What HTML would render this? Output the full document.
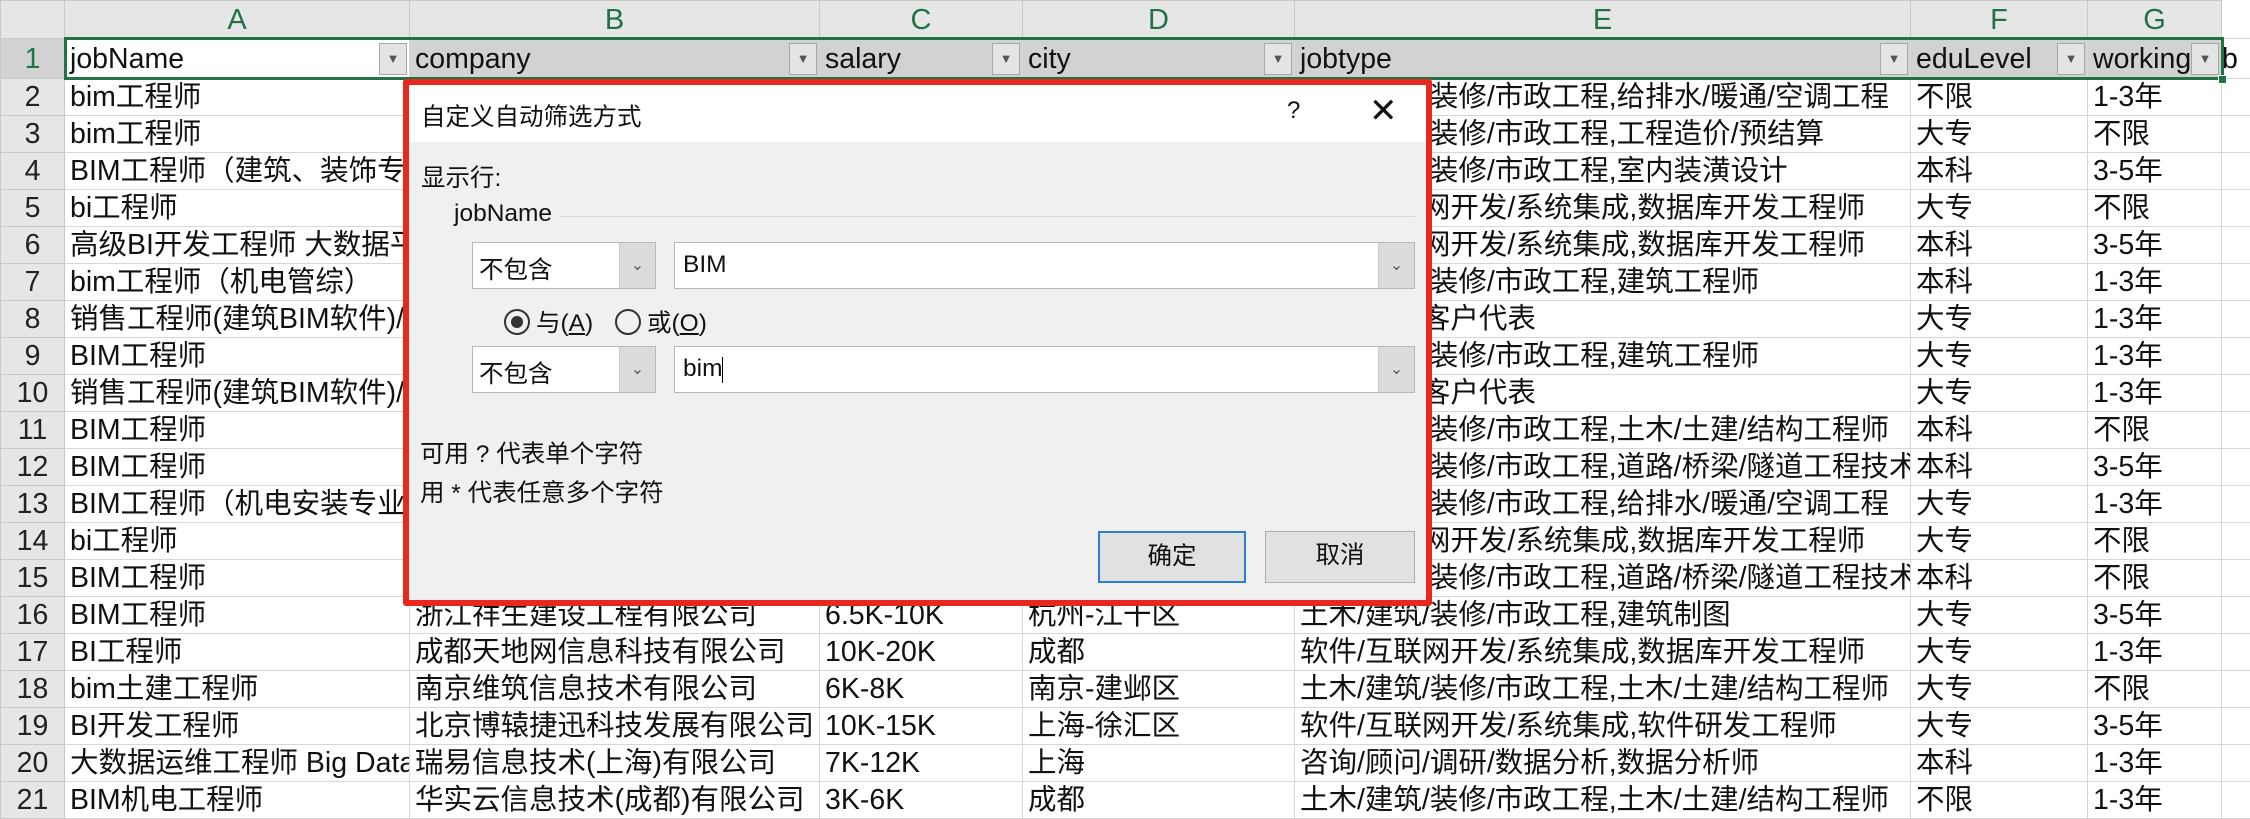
<!DOCTYPE html>
<html><head><meta charset="utf-8"><style>
*{box-sizing:border-box;margin:0;padding:0}
body{width:2250px;height:818px;overflow:hidden;background:#fff;position:relative;font-family:"Liberation Sans","Noto Sans CJK SC",sans-serif;color:#111}
table{border-collapse:collapse;table-layout:fixed;position:absolute;left:0;top:0;width:2250px}
td{border:1px solid #d6d6d6;overflow:hidden;white-space:nowrap;font-size:28.5px;padding:0 0 0 5px;height:37px;line-height:34px}
tr.ch td{background:#e6e6e6;color:#217346;text-align:center;height:38px;font-size:29px;border-color:#c8c8c8;padding:0}
td.rh{background:#e6e6e6;text-align:center;padding:0;color:#222;border-color:#c8c8c8}
tr.h1 td{height:40px;background:#d2d2d2;position:relative}
tr.h1 td.a{background:#fff}
tr.h1 td.rh{background:#d2d2d2;color:#217346}
.dd{position:absolute;right:2px;top:4px;width:28px;height:32px;border:1px solid #a8a8a8;background:#e4e4e4;font-size:13px;line-height:30px;text-align:center;color:#555;padding:0}
.sel{position:absolute;left:64px;top:37px;width:2160px;height:43px;border:3px solid #217346}
.fh{position:absolute;left:2218px;top:75px;width:9px;height:9px;background:#217346;border:1px solid #fff}
.dlg{position:absolute;left:403px;top:79px;width:1029px;height:527px;border:6px solid #e8281e;background:#f0f0f0;font-size:24.5px;border-radius:3px}
.tb{position:absolute;left:0;top:0;right:0;height:57px;background:#fff}
.abs{position:absolute;white-space:nowrap}
.combo{position:absolute;background:#fff;border:1px solid #b8b8b8}
.btn{position:absolute;right:0;top:0;bottom:0;width:36px;background:#dcdcdc;border-left:1px solid #c8c8c8;text-align:center;color:#555;font-size:16px}
.pb{position:absolute;background:#e1e1e1;border:1px solid #adadad;text-align:center;line-height:48px}
</style></head><body>
<table>
<colgroup><col style="width:64px"><col style="width:345px"><col style="width:410px"><col style="width:203px"><col style="width:272px"><col style="width:616px"><col style="width:177px"><col style="width:134px"><col style="width:29px"></colgroup>
<tr class="ch"><td style="background:#e6e6e6"></td><td>A</td><td>B</td><td>C</td><td>D</td><td>E</td><td>F</td><td>G</td><td style="background:#fff;border:none"></td></tr>
<tr class="h1"><td class="rh">1</td><td class="a">jobName<span class="dd">▼</span></td><td>company<span class="dd">▼</span></td><td>salary<span class="dd">▼</span></td><td>city<span class="dd">▼</span></td><td>jobtype<span class="dd">▼</span></td><td>eduLevel<span class="dd">▼</span></td><td>working<span class="dd">▼</span></td><td style="background:#fff;padding:0">b</td></tr>
<tr><td class="rh">2</td><td>bim工程师</td><td></td><td></td><td></td><td>土木/建筑/装修/市政工程,给排水/暖通/空调工程</td><td>不限</td><td>1-3年</td><td></td></tr>
<tr><td class="rh">3</td><td>bim工程师</td><td></td><td></td><td></td><td>土木/建筑/装修/市政工程,工程造价/预结算</td><td>大专</td><td>不限</td><td></td></tr>
<tr><td class="rh">4</td><td>BIM工程师（建筑、装饰专业）</td><td></td><td></td><td></td><td>土木/建筑/装修/市政工程,室内装潢设计</td><td>本科</td><td>3-5年</td><td></td></tr>
<tr><td class="rh">5</td><td>bi工程师</td><td></td><td></td><td></td><td>软件/互联网开发/系统集成,数据库开发工程师</td><td>大专</td><td>不限</td><td></td></tr>
<tr><td class="rh">6</td><td>高级BI开发工程师 大数据平台</td><td></td><td></td><td></td><td>软件/互联网开发/系统集成,数据库开发工程师</td><td>本科</td><td>3-5年</td><td></td></tr>
<tr><td class="rh">7</td><td>bim工程师（机电管综）</td><td></td><td></td><td></td><td>土木/建筑/装修/市政工程,建筑工程师</td><td>本科</td><td>1-3年</td><td></td></tr>
<tr><td class="rh">8</td><td>销售工程师(建筑BIM软件)/</td><td></td><td></td><td></td><td>销售业务,客户代表</td><td>大专</td><td>1-3年</td><td></td></tr>
<tr><td class="rh">9</td><td>BIM工程师</td><td></td><td></td><td></td><td>土木/建筑/装修/市政工程,建筑工程师</td><td>大专</td><td>1-3年</td><td></td></tr>
<tr><td class="rh">10</td><td>销售工程师(建筑BIM软件)/</td><td></td><td></td><td></td><td>销售业务,客户代表</td><td>大专</td><td>1-3年</td><td></td></tr>
<tr><td class="rh">11</td><td>BIM工程师</td><td></td><td></td><td></td><td>土木/建筑/装修/市政工程,土木/土建/结构工程师</td><td>本科</td><td>不限</td><td></td></tr>
<tr><td class="rh">12</td><td>BIM工程师</td><td></td><td></td><td></td><td>土木/建筑/装修/市政工程,道路/桥梁/隧道工程技术</td><td>本科</td><td>3-5年</td><td></td></tr>
<tr><td class="rh">13</td><td>BIM工程师（机电安装专业）</td><td></td><td></td><td></td><td>土木/建筑/装修/市政工程,给排水/暖通/空调工程</td><td>大专</td><td>1-3年</td><td></td></tr>
<tr><td class="rh">14</td><td>bi工程师</td><td></td><td></td><td></td><td>软件/互联网开发/系统集成,数据库开发工程师</td><td>大专</td><td>不限</td><td></td></tr>
<tr><td class="rh">15</td><td>BIM工程师</td><td></td><td></td><td></td><td>土木/建筑/装修/市政工程,道路/桥梁/隧道工程技术</td><td>本科</td><td>不限</td><td></td></tr>
<tr><td class="rh">16</td><td>BIM工程师</td><td>浙江祥生建设工程有限公司</td><td>6.5K-10K</td><td>杭州-江干区</td><td>土木/建筑/装修/市政工程,建筑制图</td><td>大专</td><td>3-5年</td><td></td></tr>
<tr><td class="rh">17</td><td>BI工程师</td><td>成都天地网信息科技有限公司</td><td>10K-20K</td><td>成都</td><td>软件/互联网开发/系统集成,数据库开发工程师</td><td>大专</td><td>1-3年</td><td></td></tr>
<tr><td class="rh">18</td><td>bim土建工程师</td><td>南京维筑信息技术有限公司</td><td>6K-8K</td><td>南京-建邺区</td><td>土木/建筑/装修/市政工程,土木/土建/结构工程师</td><td>大专</td><td>不限</td><td></td></tr>
<tr><td class="rh">19</td><td>BI开发工程师</td><td>北京博辕捷迅科技发展有限公司</td><td>10K-15K</td><td>上海-徐汇区</td><td>软件/互联网开发/系统集成,软件研发工程师</td><td>大专</td><td>3-5年</td><td></td></tr>
<tr><td class="rh">20</td><td>大数据运维工程师 Big Data</td><td>瑞易信息技术(上海)有限公司</td><td>7K-12K</td><td>上海</td><td>咨询/顾问/调研/数据分析,数据分析师</td><td>本科</td><td>1-3年</td><td></td></tr>
<tr><td class="rh">21</td><td>BIM机电工程师</td><td>华实云信息技术(成都)有限公司</td><td>3K-6K</td><td>成都</td><td>土木/建筑/装修/市政工程,土木/土建/结构工程师</td><td>不限</td><td>1-3年</td><td></td></tr>
</table>
<div class="sel"></div><div class="fh"></div>

<div class="dlg">
 <div class="tb"></div>
 <div class="abs" style="left:12px;top:13px">自定义自动筛选方式</div>
 <div class="abs" style="left:878px;top:12px;font-size:24px">?</div>
 <div class="abs" style="left:960px;top:6px;font-size:34px;font-weight:300">✕</div>
 <div class="abs" style="left:12px;top:74px">显示行:</div>
 <div class="abs" style="left:45px;top:115px">jobName</div>
 <div class="abs" style="left:150px;top:131px;width:856px;height:1px;background:#d8d8d8"></div>
 <div class="combo" style="left:63px;top:157px;width:184px;height:47px"><span class="abs" style="left:6px;top:8px">不包含</span><div class="btn" style="line-height:45px">⌄</div></div>
 <div class="combo" style="left:265px;top:157px;width:741px;height:47px"><span class="abs" style="left:8px;top:8px">BIM</span><div class="btn" style="line-height:45px">⌄</div></div>
 <div class="abs" style="left:95px;top:224px;width:26px;height:26px;border:2px solid #333;border-radius:50%"><div style="position:absolute;left:5px;top:5px;width:12px;height:12px;border-radius:50%;background:#333"></div></div>
 <div class="abs" style="left:127px;top:219px">与(<u>A</u>)</div>
 <div class="abs" style="left:206px;top:224px;width:26px;height:26px;border:2px solid #333;border-radius:50%"></div>
 <div class="abs" style="left:238px;top:219px">或(<u>O</u>)</div>
 <div class="combo" style="left:63px;top:261px;width:184px;height:47px"><span class="abs" style="left:6px;top:8px">不包含</span><div class="btn" style="line-height:45px">⌄</div></div>
 <div class="combo" style="left:265px;top:261px;width:741px;height:47px"><span class="abs" style="left:8px;top:8px">bim<span style="display:inline-block;width:1px;height:26px;background:#000;vertical-align:middle"></span></span><div class="btn" style="line-height:45px">⌄</div></div>
 <div class="abs" style="left:11px;top:350px">可用 ? 代表单个字符</div>
 <div class="abs" style="left:11px;top:389px">用 * 代表任意多个字符</div>
 <div class="pb" style="left:689px;top:446px;width:148px;height:52px;border:2px solid #2a7fd4">确定</div>
 <div class="pb" style="left:856px;top:446px;width:150px;height:52px">取消</div>
</div>
</body></html>
